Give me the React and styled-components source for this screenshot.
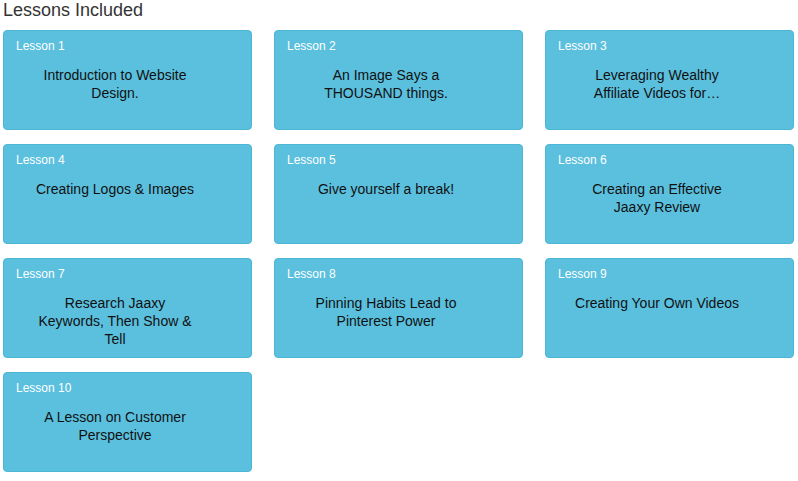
import styled, { createGlobalStyle } from 'styled-components'

const GlobalStyle = createGlobalStyle`
  body {
    margin: 0;
    background: #fff;
    font-family: "Liberation Sans", Arial, sans-serif;
  }
`

const Wrapper = styled.section`
  padding: 0 3px;
`

const Heading = styled.h3`
  margin: 0 0 10px;
  font-size: 18px;
  font-weight: normal;
  line-height: 20px;
  color: #333;
`

const Grid = styled.div`
  display: grid;
  grid-template-columns: repeat(3, 249px);
  column-gap: 22px;
  row-gap: 14px;
`

const Card = styled.div`
  box-sizing: border-box;
  height: 100px;
  background: #5bc0de;
  border: 1px solid #4bb6d6;
  border-radius: 4px;
  padding: 8px 12px 0;
`

const Label = styled.div`
  font-size: 12px;
  line-height: 14px;
  color: #fff;
`

const Title = styled.div`
  width: 166px;
  margin: 13px 0 0 16px;
  font-size: 14px;
  line-height: 18px;
  color: #111;
  text-align: center;
`

const lessons = [
  'Introduction to Website Design.',
  'An Image Says a THOUSAND things.',
  'Leveraging Wealthy Affiliate Videos for\u2026',
  'Creating Logos & Images',
  'Give yourself a break!',
  'Creating an Effective Jaaxy Review',
  'Research Jaaxy Keywords, Then Show & Tell',
  'Pinning Habits Lead to Pinterest Power',
  'Creating Your Own Videos',
  'A Lesson on Customer Perspective',
]

const App = () => {
  return (
    <>
      <GlobalStyle />
      <Wrapper>
        <Heading>Lessons Included</Heading>
        <Grid>
          {lessons.map((title, i) => (
            <Card key={title}>
              <Label>Lesson {i + 1}</Label>
              <Title>{title}</Title>
            </Card>
          ))}
        </Grid>
      </Wrapper>
    </>
  )
}

export default App
